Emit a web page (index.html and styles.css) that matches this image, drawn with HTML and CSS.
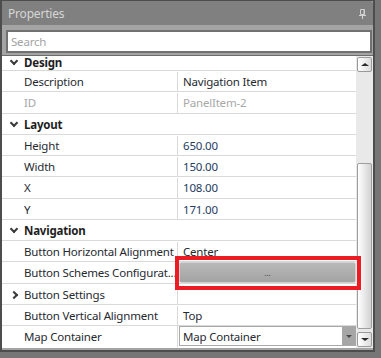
FILE: index.html
```html
<!DOCTYPE html>
<html lang="en">
<head>
    <meta charset="UTF-8">
    <meta name="viewport" content="width=device-width, initial-scale=1.0">
    <title>Properties</title>
    <link rel="stylesheet" href="styles.css">
</head>
<body>
    <div class="window">
        <div class="frame">
            <div class="panel">
                <div class="titlebar">
                    <span class="title">Properties</span>
                    <svg class="pin" width="7" height="10" viewBox="0 0 7 10">
                        <path d="M1.5 0.5h4v5h-4z" fill="none" stroke="#d2d2d2"/>
                        <path d="M0 6h7v1H0z M3 7h1v3H3z M4.5 1h1v4.5h-1z" fill="#d2d2d2"/>
                    </svg>
                </div>

                <div class="searchbar">
                    <div class="search">Search</div>
                </div>

                <div class="grid">
                    <div class="rows">
                        <div class="row header first">
                            <span class="chev open"></span>Design
                        </div>
                        <div class="row">
                            <span class="name">Description</span>
                            <span class="value">Navigation Item</span>
                        </div>
                        <div class="row disabled">
                            <span class="name">ID</span>
                            <span class="value">PanelItem-2</span>
                        </div>
                        <div class="row header">
                            <span class="chev open"></span>Layout
                        </div>
                        <div class="row">
                            <span class="name">Height</span>
                            <span class="value num">650.00</span>
                        </div>
                        <div class="row">
                            <span class="name">Width</span>
                            <span class="value num">150.00</span>
                        </div>
                        <div class="row">
                            <span class="name">X</span>
                            <span class="value num">108.00</span>
                        </div>
                        <div class="row">
                            <span class="name">Y</span>
                            <span class="value num">171.00</span>
                        </div>
                        <div class="row header">
                            <span class="chev open"></span>Navigation
                        </div>
                        <div class="row">
                            <span class="name">Button Horizontal Alignment</span>
                            <span class="value">Center</span>
                        </div>
                        <div class="row">
                            <span class="name">Button Schemes Configurat...</span>
                            <span class="value editor">
                                <span class="dots-btn">...</span>
                            </span>
                        </div>
                        <div class="row">
                            <span class="name"><span class="chev closed"></span>Button Settings</span>
                            <span class="value"></span>
                        </div>
                        <div class="row">
                            <span class="name">Button Vertical Alignment</span>
                            <span class="value">Top</span>
                        </div>
                        <div class="row last">
                            <span class="name">Map Container</span>
                            <span class="value editor">
                                <span class="combo">
                                    <span class="combo-text">Map Container</span>
                                    <span class="combo-drop"><span class="tri down"></span></span>
                                </span>
                            </span>
                        </div>
                    </div>

                    <div class="scrollbar">
                        <div class="sb-btn"><span class="tri up"></span></div>
                        <div class="sb-thumb"></div>
                        <div class="sb-btn"><span class="tri down"></span></div>
                    </div>
                </div>
            </div>
        </div>
        <div class="highlight"></div>
    </div>
</body>
</html>
```

FILE: styles.css
```css
body {
    margin: 0;
    font-family: "Noto Sans", "Open Sans", sans-serif;
    font-size: 11.5px;
    letter-spacing: -0.2px;
    background: #767676;
}

.window {
    position: relative;
    width: 381px;
    height: 358px;
    background: #767676;
    overflow: hidden;
}

.frame {
    width: 375px;
    height: 352px;
    box-sizing: border-box;
    padding: 1px 2px 2px 2px;
    background: #4d4d4d;
}

.panel {
    display: flex;
    flex-direction: column;
    height: 349px;
    background: #a4a4a4;
}

.titlebar {
    display: flex;
    align-items: center;
    justify-content: space-between;
    height: 24px;
    padding: 0 7px 0 6px;
    background: #808080;
    border-top-right-radius: 3px;
}

.title {
    color: #d6d6d6;
    font-size: 12px;
}

.pin {
    margin-top: 1px;
}

.searchbar {
    height: 31px;
    box-sizing: border-box;
    padding: 5px 1px 0 4px;
    background: #a4a4a4;
    border-bottom: 1px solid #6c6c6c;
}

.search {
    height: 23px;
    box-sizing: border-box;
    border: 2px solid #717171;
    background: #fff;
    color: #a3a3a3;
    padding: 1px 3px;
    line-height: 17px;
}

.grid {
    display: flex;
    height: 292px;
    background: #fff;
}

.rows {
    flex: 1;
    overflow: hidden;
}

.row {
    display: flex;
    height: 21.25px;
    box-sizing: border-box;
    padding-top: 1px;
    border-bottom: 1px solid #d9d9d9;
    color: #262a30;
    line-height: 19px;
}

.row.first {
    height: 15px;
    padding-top: 0;
    line-height: 13px;
}

.row.last {
    height: 21px;
    padding-top: 0;
    border-bottom: none;
}

.row.header {
    position: relative;
    padding-left: 22px;
    font-weight: bold;
    color: #1e1e1e;
}

.name {
    position: relative;
    width: 176px;
    flex: none;
    box-sizing: border-box;
    padding-left: 22px;
    border-right: 1px solid #d9d9d9;
    white-space: nowrap;
    overflow: hidden;
}

.row.last .name {
    line-height: 21px;
}

.value {
    flex: 1;
    padding-left: 5px;
    white-space: nowrap;
}

.value.num {
    color: #243c60;
}

.row.disabled {
    color: #a8a8a8;
}

.value.editor {
    padding: 0 0 0 1px;
}

.chev {
    position: absolute;
    width: 4px;
    height: 4px;
    border-right: 2px solid #3a3a3a;
    border-bottom: 2px solid #3a3a3a;
}

.chev.open {
    left: 9px;
    top: 6px;
    transform: rotate(45deg);
}

.row.first .chev.open {
    top: 2px;
}

.chev.closed {
    left: 9px;
    top: 7px;
    transform: rotate(-45deg);
}

.dots-btn {
    display: block;
    height: 21px;
    margin-top: -1px;
    box-sizing: border-box;
    border: 1px solid #d2d2d2;
    border-radius: 2px;
    background: linear-gradient(#b9b9b9, #a3a3a3);
    color: #505050;
    text-align: center;
    font-size: 9px;
    line-height: 19px;
}

.combo {
    display: flex;
    height: 20px;
    box-sizing: border-box;
    border: 1px solid #a9a9a9;
    background: #fff;
}

.combo-text {
    flex: 1;
    padding-left: 3px;
    line-height: 19px;
}

.combo-drop {
    display: flex;
    align-items: center;
    justify-content: center;
    width: 13px;
    background: #a6a6a6;
}

.tri {
    width: 0;
    height: 0;
    border-left: 4px solid transparent;
    border-right: 4px solid transparent;
}

.tri.down {
    border-top: 3px solid #2a2a2a;
}

.tri.up {
    border-bottom: 3px solid #2a2a2a;
}

.combo-drop .tri.down {
    border-left-width: 3px;
    border-right-width: 3px;
    border-top-color: #4a4a4a;
}

.scrollbar {
    display: flex;
    flex-direction: column;
    width: 17px;
    box-sizing: border-box;
    padding: 1px 1px 0 1px;
    background: #e9e9e9;
}

.sb-btn {
    display: flex;
    align-items: center;
    justify-content: center;
    height: 15px;
    box-sizing: border-box;
    border: 1px solid #9a9a9a;
    border-radius: 2px;
    background: linear-gradient(90deg, #ffffff, #dcdcdc);
}

.sb-thumb {
    height: 166px;
    margin: 91px 0 3px 0;
    box-sizing: border-box;
    border: 1px solid #9e9e9e;
    border-radius: 2px;
    background: linear-gradient(90deg, #ffffff, #d2d2d2);
}

.highlight {
    position: absolute;
    left: 175px;
    top: 256px;
    width: 186px;
    height: 34px;
    box-sizing: border-box;
    border: 4px solid #ec1c24;
}
```
